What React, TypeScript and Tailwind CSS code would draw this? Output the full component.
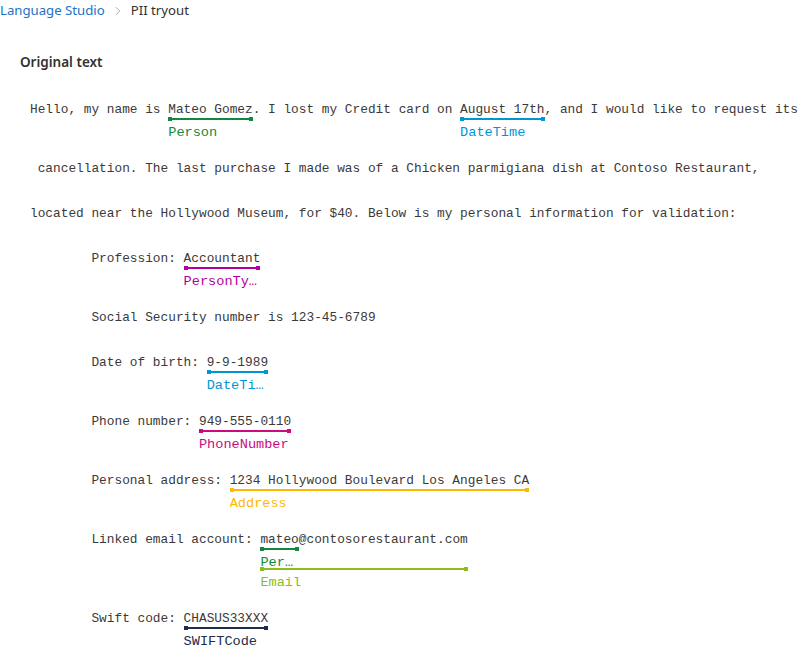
import { ChevronRight } from 'lucide-react';

type Tag = { label: string; color: string; layer?: number; width?: number };

// one highlighted entity: text with a bar and a label underneath
function Entity({ text, tags }: { text: string; tags: Tag[] }) {
  return (
    <span className="relative inline-block">
      {text}
      {tags.map((t) => {
        const off = (t.layer ?? 0) * 20;
        const w = t.width;
        return (
          <span key={t.label} className="absolute left-0 top-0" style={{ width: w ? `${w}ch` : '100%' }}>
            <span
              className="absolute left-0 right-0 h-[2px]"
              style={{ top: 18 + off, backgroundColor: t.color }}
            />
            <span className="absolute left-0 w-[4px] h-[4px]" style={{ top: 17 + off, backgroundColor: t.color }} />
            <span className="absolute right-0 w-[4px] h-[4px]" style={{ top: 17 + off, backgroundColor: t.color }} />
            <span
              className="absolute left-0 block overflow-hidden text-ellipsis whitespace-nowrap text-[13.6px] leading-[18px]"
              style={{ top: 24 + off, color: t.color, maxWidth: '100%' }}
            >
              {t.label}
            </span>
          </span>
        );
      })}
    </span>
  );
}

const PERSON = '#10893e';
const DATE = '#0096d6';
const PTYPE = '#b4009e';
const PHONE = '#cc0a80';
const ADDR = '#ffb900';
const EMAIL = '#8cbd18';
const SWIFT = '#222a50';

export default function App() {
  return (
    <div className="w-[804px] h-[649px] bg-white overflow-hidden text-[#323130]">
      {/* breadcrumb */}
      <div className="flex items-center h-[22px] text-[13.2px] font-['Noto_Sans',sans-serif]">
        <span className="text-[#2372c7]">Language Studio</span>
        <ChevronRight className="w-[14px] h-[14px] mx-[6px] text-[#a19f9d]" strokeWidth={1.5} />
        <span className="text-[#323130]">PII tryout</span>
      </div>

      <div className="pl-[20px] pt-[30px] text-[13.5px] font-semibold font-['Noto_Sans',sans-serif] leading-[20px]">
        Original text
      </div>

      <div className="pl-[30px] pt-[28px] font-['Liberation_Mono',monospace] text-[12.8px] leading-[20px] whitespace-pre text-[#3b3a39]">
        <div className="h-[59px]">
          {'Hello, my name is '}
          <Entity text="Mateo Gomez" tags={[{ label: 'Person', color: PERSON }]} />
          {'. I lost my Credit card on '}
          <Entity text="August 17th" tags={[{ label: 'DateTime', color: DATE }]} />
          {', and I would like to request its'}
        </div>
        <div className="h-[45px]">
          {' cancellation. The last purchase I made was of a Chicken parmigiana dish at Contoso Restaurant,'}
        </div>
        <div className="h-[45px]">
          {'located near the Hollywood Museum, for $40. Below is my personal information for validation:'}
        </div>
        <div className="h-[59px]">
          {'        Profession: '}
          <Entity text="Accountant" tags={[{ label: 'PersonType', color: PTYPE }]} />
        </div>
        <div className="h-[45px]">{'        Social Security number is 123-45-6789'}</div>
        <div className="h-[59px]">
          {'        Date of birth: '}
          <Entity text="9-9-1989" tags={[{ label: 'DateTime', color: DATE }]} />
        </div>
        <div className="h-[59px]">
          {'        Phone number: '}
          <Entity text="949-555-0110" tags={[{ label: 'PhoneNumber', color: PHONE }]} />
        </div>
        <div className="h-[59px]">
          {'        Personal address: '}
          <Entity text="1234 Hollywood Boulevard Los Angeles CA" tags={[{ label: 'Address', color: ADDR }]} />
        </div>
        <div className="h-[79px]">
          {'        Linked email account: '}
          <Entity
            text="mateo@contosorestaurant.com"
            tags={[
              { label: 'Person', color: PERSON, width: 5 },
              { label: 'Email', color: EMAIL, layer: 1 },
            ]}
          />
        </div>
        <div className="h-[59px]">
          {'        Swift code: '}
          <Entity text="CHASUS33XXX" tags={[{ label: 'SWIFTCode', color: SWIFT }]} />
        </div>
      </div>
    </div>
  );
}
